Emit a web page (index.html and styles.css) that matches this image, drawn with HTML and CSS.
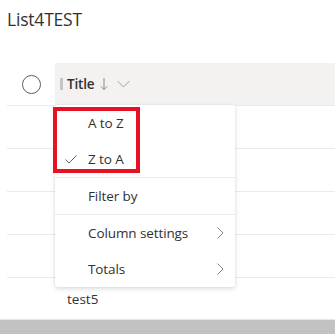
FILE: index.html
```html
<!DOCTYPE html>
<html>
<head>
    <title>List4TEST</title>
    <link rel="stylesheet" href="styles.css">
</head>
<body>
    <h1 class="list-title">List4TEST</h1>
    <div class="list">
        <div class="list-header">
            <div class="check-col">
                <span class="check-circle"></span>
            </div>
            <div class="header-cell">
                <span class="resize-grip"></span>
                <span class="col-name">Title</span>
                <span class="sort-arrow">
                    <svg width="8" height="14" viewBox="0 0 8 14"><path d="M4 1 V12.5 M0.8 9.3 L4 12.5 L7.2 9.3" fill="none" stroke="#8a8886" stroke-width="1"/></svg>
                </span>
                <span class="col-chevron">
                    <svg width="13" height="8" viewBox="0 0 13 8"><path d="M0.5 1 L6.5 7 L12.5 1" fill="none" stroke="#a19f9d" stroke-width="1"/></svg>
                </span>
            </div>
        </div>
        <div class="row"></div>
        <div class="row"></div>
        <div class="row"></div>
        <div class="row"></div>
        <div class="row"><span class="cell">test5</span></div>

        <div class="menu">
            <div class="menu-item">A to Z</div>
            <div class="menu-item checked">
                <svg class="check-mark" width="12" height="9" viewBox="0 0 12 9"><path d="M0.5 4.5 L4 8 L11.5 0.5" fill="none" stroke="#605e5c" stroke-width="1"/></svg>
                Z to A
            </div>
            <div class="menu-sep"></div>
            <div class="menu-item">Filter by</div>
            <div class="menu-sep"></div>
            <div class="menu-item">Column settings
                <svg class="sub-chevron" width="7" height="12" viewBox="0 0 7 12"><path d="M0.5 0.5 L6 6 L0.5 11.5" fill="none" stroke="#8a8886" stroke-width="1"/></svg>
            </div>
            <div class="menu-item">Totals
                <svg class="sub-chevron" width="7" height="12" viewBox="0 0 7 12"><path d="M0.5 0.5 L6 6 L0.5 11.5" fill="none" stroke="#8a8886" stroke-width="1"/></svg>
            </div>
            <div class="highlight-box"></div>
        </div>
    </div>
    <div class="bottom-bar"></div>
</body>
</html>
```

FILE: styles.css
```css
body {
    margin: 0;
    font-family: "Open Sans", "Noto Sans", sans-serif;
    color: #323130;
    background: #fff;
    width: 335px;
    height: 334px;
    overflow: hidden;
}
.list-title {
    margin: 0;
    padding: 7px 0 0 7px;
    height: 63px;
    box-sizing: border-box;
    font-size: 17.5px;
    font-weight: 400;
    line-height: 25px;
    letter-spacing: -0.2px;
}
.list {
    position: relative;
}
.list-header {
    display: flex;
    height: 42px;
    margin-left: 7px;
    border-bottom: 1px solid #edebe9;
}
.check-col {
    width: 48px;
    display: flex;
    align-items: center;
    justify-content: center;
    background: #fff;
}
.check-circle {
    width: 17px;
    height: 17px;
    border: 1px solid #605e5c;
    border-radius: 50%;
}
.header-cell {
    flex: 1;
    display: flex;
    align-items: center;
    background: #f3f2f1;
    padding-left: 5px;
}
.resize-grip {
    width: 3px;
    height: 12px;
    background: #c8c6c4;
    margin-right: 4px;
}
.col-name {
    font-size: 13.5px;
    font-weight: 600;
    letter-spacing: -0.2px;
}
.sort-arrow {
    display: flex;
    margin-left: 6px;
}
.col-chevron {
    display: flex;
    margin-left: 9px;
}
.row {
    height: 42px;
    margin-left: 7px;
    border-bottom: 1px solid #edebe9;
    display: flex;
    align-items: center;
}
.cell {
    padding-left: 60px;
    font-size: 13.5px;
}
.menu {
    position: absolute;
    left: 55px;
    top: 42px;
    width: 180px;
    background: #fff;
    box-shadow: 0 2px 5px rgba(0, 0, 0, 0.13), 0 0 2px rgba(0, 0, 0, 0.08);
    border-radius: 2px;
}
.menu-item {
    position: relative;
    height: 36px;
    display: flex;
    align-items: center;
    padding-left: 33px;
    font-size: 13.5px;
    letter-spacing: -0.1px;
}
.check-mark {
    position: absolute;
    left: 10px;
    top: 14px;
}
.sub-chevron {
    position: absolute;
    right: 11px;
    top: 12px;
}
.menu-sep {
    height: 1px;
    background: #edebe9;
}
.highlight-box {
    position: absolute;
    left: -2px;
    top: 2px;
    width: 87px;
    height: 66px;
    border: 4px solid #e81123;
    box-sizing: border-box;
}
.bottom-bar {
    position: absolute;
    left: 0;
    top: 319px;
    width: 335px;
    height: 15px;
    background: #c2c2c2;
    border-top: 1px solid #e6e6e6;
}
```
